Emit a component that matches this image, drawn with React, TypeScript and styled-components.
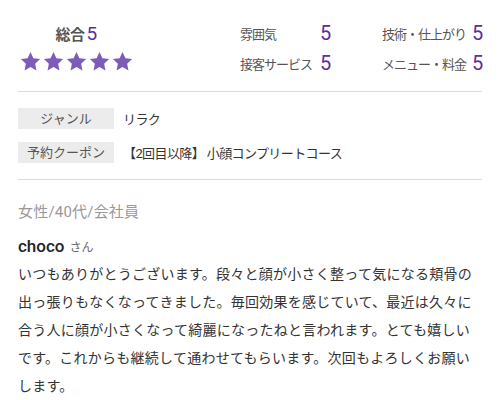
import React from 'react';
import styled, { createGlobalStyle } from 'styled-components';

const GlobalStyle = createGlobalStyle`
    body {
        margin: 0;
        background: #fff;
        font-family: Roboto, "Noto Sans CJK JP", sans-serif;
        color: #333;
    }
`;

const Page = styled.div`
    width: 500px;
    padding: 0 18px;
    box-sizing: border-box;
`;

const RatingSection = styled.div`
    display: flex;
    justify-content: space-between;
    align-items: flex-start;
    padding: 18px 0 13px;
    border-bottom: 1px solid #dcdcdc;
`;

const Overall = styled.div`
    width: 116px;
    margin-top: 4px;
    display: flex;
    flex-direction: column;
    align-items: center;
`;

const OverallTitle = styled.div`
    font-size: 15px;
    line-height: 24px;
    color: #555;
    font-weight: 700;
    letter-spacing: -0.5px;
`;

const Score = styled.span<{ size?: number }>`
    font-size: ${(p) => p.size || 20}px;
    color: #5b2d9e;
    font-weight: 400;
    margin-left: 2px;
`;

const Stars = styled.div`
    display: flex;
    gap: 2px;
    margin-top: 4px;
`;

const ScoreGrid = styled.div`
    display: grid;
    grid-template-columns: 78px 64px 88px 12px;
    grid-auto-rows: 30px;
    align-items: center;
`;

const ScoreLabel = styled.div`
    font-size: 13px;
    color: #555;
    letter-spacing: -1px;
    white-space: nowrap;
`;

const InfoSection = styled.div`
    display: flex;
    flex-direction: column;
    gap: 13px;
    padding: 16px 0 16px;
    border-bottom: 1px solid #dcdcdc;
`;

const InfoRow = styled.div`
    display: flex;
    align-items: center;
    gap: 9px;
`;

const InfoLabel = styled.div`
    width: 96px;
    height: 21px;
    line-height: 21px;
    background: #ececec;
    color: #555;
    font-size: 13px;
    text-align: center;
`;

const InfoValue = styled.div`
    font-size: 13px;
    letter-spacing: -0.6px;
    color: #333;
`;

const Profile = styled.div`
    margin-top: 20px;
    font-size: 15px;
    line-height: 24px;
    letter-spacing: 0.2px;
    color: #999;
`;

const Author = styled.div`
    margin-top: 10px;
    line-height: 24px;
    font-size: 17px;
    color: #222;
    font-weight: 500;
`;

const Honorific = styled.span`
    font-size: 12px;
    color: #666;
    margin-left: 5px;
    font-weight: 400;
`;

const Body = styled.p`
    margin: 0;
    font-size: 14px;
    letter-spacing: 0.25px;
    line-height: 28px;
    color: #333;
`;

const Star = () => (
    <svg width="21" height="21" viewBox="0 0 24 24">
        <path
            d="M12 1.2l3.3 7.1 7.7.9-5.7 5.3 1.5 7.7L12 18.4l-6.8 3.8 1.5-7.7L1 9.2l7.7-.9z"
            fill="#7c5cb8"
        />
    </svg>
);

const scores = [
    ['雰囲気', '5'],
    ['技術・仕上がり', '5'],
    ['接客サービス', '5'],
    ['メニュー・料金', '5'],
];

const App = () => {
    return (
        <Page>
            <GlobalStyle />
            <RatingSection>
                <Overall>
                    <OverallTitle>
                        総合<Score size={19}>5</Score>
                    </OverallTitle>
                    <Stars>
                        {[0, 1, 2, 3, 4].map((i) => (
                            <Star key={i} />
                        ))}
                    </Stars>
                </Overall>
                <ScoreGrid>
                    {scores.map(([label, value]) => (
                        <React.Fragment key={label}>
                            <ScoreLabel>{label}</ScoreLabel>
                            <Score>{value}</Score>
                        </React.Fragment>
                    ))}
                </ScoreGrid>
            </RatingSection>
            <InfoSection>
                <InfoRow>
                    <InfoLabel>ジャンル</InfoLabel>
                    <InfoValue>リラク</InfoValue>
                </InfoRow>
                <InfoRow>
                    <InfoLabel>予約クーポン</InfoLabel>
                    <InfoValue>【2回目以降】 小顔コンプリートコース</InfoValue>
                </InfoRow>
            </InfoSection>
            <Profile>女性/40代/会社員</Profile>
            <Author>
                choco<Honorific>さん</Honorific>
            </Author>
            <Body>
                いつもありがとうございます。段々と顔が小さく整って気になる頬骨の出っ張りもなくなってきました。毎回効果を感じていて、最近は久々に合う人に顔が小さくなって綺麗になったねと言われます。とても嬉しいです。これからも継続して通わせてもらいます。次回もよろしくお願いします。
            </Body>
        </Page>
    );
};

export default App;
